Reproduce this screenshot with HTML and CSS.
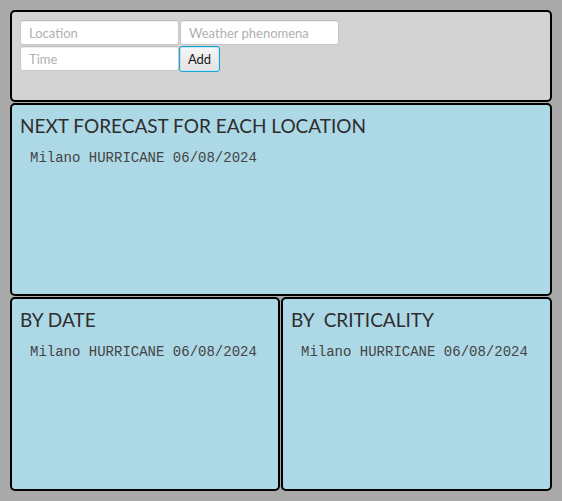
FILE: index.html
```html
<!DOCTYPE html>
<html>
<head>
<meta charset="utf-8">
<link rel="stylesheet" href="styles.css">
</head>
<body>
<div class="app">
  <section class="panel form-panel">
    <div class="form-grid">
      <input class="field" type="text" placeholder="Location">
      <input class="field" type="text" placeholder="Weather phenomena">
      <input class="field" type="text" placeholder="Time">
      <button class="add-btn">Add</button>
    </div>
  </section>
  <section class="panel list-panel tall">
    <h2 class="title">NEXT FORECAST FOR EACH LOCATION</h2>
    <div class="entry">Milano HURRICANE 06/08/2024</div>
  </section>
  <div class="row">
    <section class="panel list-panel">
      <h2 class="title">BY DATE</h2>
      <div class="entry">Milano HURRICANE 06/08/2024</div>
    </section>
    <section class="panel list-panel">
      <h2 class="title">BY&nbsp; CRITICALITY</h2>
      <div class="entry">Milano HURRICANE 06/08/2024</div>
    </section>
  </div>
</div>
</body>
</html>
```
FILE: styles.css
```css
* { box-sizing: border-box; }
html, body {
  margin: 0;
  padding: 0;
  background: #a9a9a9;
  width: 562px;
  height: 501px;
  overflow: hidden;
  font-family: Lato, "Open Sans", sans-serif;
}
.app {
  padding: 10px 10px 0 10px;
  display: flex;
  flex-direction: column;
  gap: 1px;
}
.panel {
  border: 2px solid #000;
  border-radius: 5px;
}
.form-panel {
  background: #d3d3d3;
  height: 92px;
  padding: 8px;
}
.form-grid {
  display: grid;
  grid-template-columns: 159px auto;
  grid-template-rows: 25px 25px;
  column-gap: 1px;
  row-gap: 1px;
  justify-content: start;
}
.field {
  width: 159px;
  height: 25px;
  margin: 0;
  border: 1px solid #c8c8c8;
  border-top-color: #bebebe;
  border-radius: 3px;
  background: #fff;
  box-shadow: inset 0 1px 1px #ededed;
  padding: 0 8px;
  font-family: Lato, "Open Sans", sans-serif;
  font-size: 13px;
  color: #333;
  outline: none;
}
.field::placeholder { color: #b0b0b0; }
.add-btn {
  justify-self: start;
  width: 41px;
  height: 26px;
  margin: 0 0 0 -1px;
  padding: 0;
  border: 1px solid #1aa2d6;
  border-radius: 3px;
  box-shadow: inset 0 0 0 1px #c4e5f3;
  background: linear-gradient(#f6f6f6, #e2e2e2);
  font-family: Lato, "Open Sans", sans-serif;
  font-size: 13px;
  color: #1a1a1a;
}
.list-panel {
  background: #add8e6;
  height: 194px;
  padding: 9px 8px;
}
.tall { height: 193px; }
.row {
  display: grid;
  grid-template-columns: 270px 271px;
  gap: 1px;
}
.title {
  margin: 0;
  font-family: Lato, "Open Sans", sans-serif;
  font-weight: normal;
  font-size: 19px;
  line-height: 24px;
  color: #2e2e2e;
}
.entry {
  margin: 12px 0 0 10px;
  font-family: "Liberation Mono", monospace;
  font-size: 14px;
  line-height: 16px;
  color: #444;
  white-space: pre;
}
```
